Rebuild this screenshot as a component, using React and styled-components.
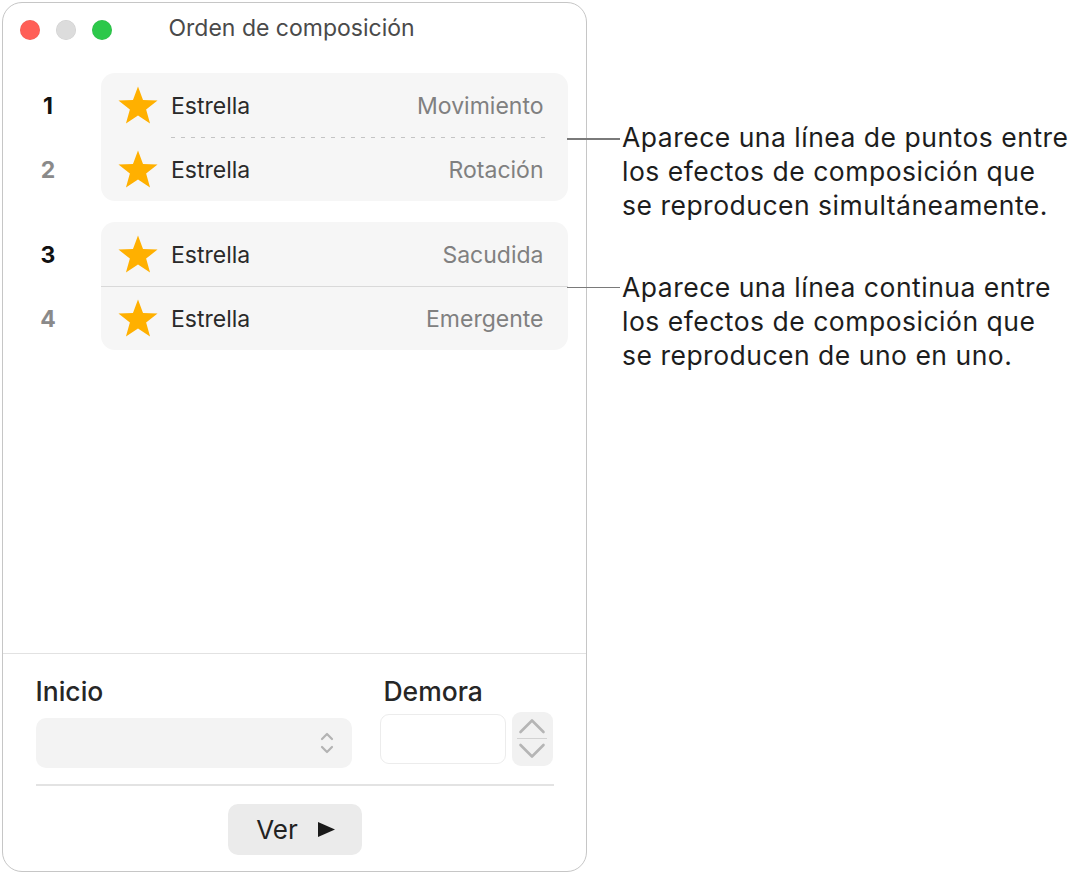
import React from "react";
import styled, { createGlobalStyle } from "styled-components";

const GlobalStyle = createGlobalStyle`
  html, body { margin: 0; padding: 0; background: #ffffff; }
  body {
    font-family: Inter, "Noto Sans", "Liberation Sans", sans-serif;
    -webkit-font-smoothing: antialiased;
    color: #1d1d1f;
  }
`;

const Page = styled.div`
  width: 1085px;
  height: 878px;
  box-sizing: border-box;
  padding: 2px 0 0 2px;
  display: flex;
  align-items: flex-start;
`;

const Window = styled.div`
  width: 585px;
  height: 870px;
  box-sizing: border-box;
  border: 1.5px solid #c6c6c6;
  border-radius: 20px;
  background: #fff;
  display: flex;
  flex-direction: column;
  overflow: hidden;
`;

const TitleBar = styled.div`
  height: 53px;
  display: flex;
  align-items: center;
  padding-left: 16.5px;
`;

const Lights = styled.div`
  display: flex;
  gap: 16px;
`;

const Light = styled.span`
  width: 20px;
  height: 20px;
  border-radius: 50%;
  background: ${(p) => p.$color};
  box-shadow: inset 0 0 0 0.5px rgba(0, 0, 0, 0.08);
`;

const Title = styled.div`
  margin-left: 57px;
  padding-bottom: 3px;
  font-size: 23px;
  color: #4a4a4a;
`;

const List = styled.div`
  flex: 1;
  display: flex;
  flex-direction: column;
  gap: 21px;
  padding: 16.5px 18.5px 0 0;
`;

const Group = styled.div`
  display: flex;
`;

const Numbers = styled.div`
  width: 90px;
  margin-right: 8px;
  display: flex;
  flex-direction: column;
`;

const Num = styled.div`
  height: 64px;
  padding-top: 3px;
  box-sizing: border-box;
  display: flex;
  align-items: center;
  justify-content: center;
  font-size: 23px;
  font-weight: 700;
  color: ${(p) => (p.$dim ? "#8a8a8a" : "#111")};
`;

const Box = styled.div`
  flex: 1;
  background: #f6f6f6;
  border-radius: 14px;
  display: flex;
  flex-direction: column;
`;

const Row = styled.div`
  height: ${(p) => (p.$last ? "62.5px" : "64px")};
  box-sizing: border-box;
  display: flex;
  align-items: center;
  padding: 2px 24px 0 15px;
`;

const StarIcon = styled.svg`
  width: 44px;
  height: 42px;
  margin-right: 11px;
  flex-shrink: 0;
`;

const Name = styled.div`
  flex: 1;
  font-size: 23px;
  color: #2a2a2a;
`;

const Effect = styled.div`
  font-size: 23px;
  color: #808080;
`;

const Divider = styled.div`
  height: 1.5px;
  ${(p) =>
    p.$dashed
      ? `margin: 0 22px 0 70px;
         background: repeating-linear-gradient(to right, #c4c4c4 0 4px, transparent 4px 10px);`
      : `background: #d9d9d9;`}
`;

const Bottom = styled.div`
  border-top: 1.5px solid #e2e2e2;
  padding: 22px 32.5px 16.5px;
  display: flex;
  flex-direction: column;
`;

const Fields = styled.div`
  display: grid;
  grid-template-columns: 316px 1fr;
  column-gap: 28px;
`;

const Field = styled.div`
  display: flex;
  flex-direction: column;
`;

const Label = styled.div`
  font-size: 26.5px;
  line-height: 30px;
  font-weight: 500;
  color: #262626;
  padding-left: ${(p) => p.$indent || 0}px;
`;

const Select = styled.div`
  margin-top: 12px;
  height: 50px;
  border-radius: 10px;
  background: #f3f3f3;
  display: flex;
  align-items: center;
  justify-content: flex-end;
  padding-right: 17px;
`;

const DelayRow = styled.div`
  margin-top: 6px;
  display: flex;
  gap: 6px;
  align-items: flex-start;
`;

const Input = styled.div`
  margin-top: 2px;
  width: 126px;
  height: 50px;
  box-sizing: border-box;
  border: 1.5px solid #ececec;
  border-radius: 9px;
  background: #fff;
`;

const Stepper = styled.div`
  width: 41px;
  height: 54px;
  border-radius: 9px;
  background: #f1f1f1;
  display: flex;
  flex-direction: column;
  align-items: center;
  justify-content: center;
`;

const StepLine = styled.div`
  width: 30px;
  height: 1.5px;
  background: #d2d2d2;
  margin: 4px 0;
`;

const InnerDivider = styled.div`
  margin-top: 16.5px;
  height: 1.5px;
  background: #e3e3e3;
`;

const ButtonRow = styled.div`
  margin-top: 18px;
  display: flex;
  justify-content: center;
`;

const PlayButton = styled.div`
  width: 134px;
  height: 51px;
  border-radius: 10px;
  background: #ebebeb;
  display: flex;
  align-items: center;
  justify-content: center;
  gap: 20px;
  font-size: 26px;
  color: #222;
  padding-left: 2px;
  box-sizing: border-box;
`;

const Notes = styled.div`
  margin-left: 35px;
  padding-top: 118px;
  display: flex;
  flex-direction: column;
  gap: 48px;
`;

const Note = styled.div`
  position: relative;
  font-size: 26.5px;
  letter-spacing: 0.5px;
  line-height: 34px;
  color: #1d1d1d;
  white-space: nowrap;
`;

const Leader = styled.span`
  position: absolute;
  left: -55px;
  top: ${(p) => p.$top}px;
  width: 53px;
  height: 1.5px;
  background: #7a7a7a;
`;

const Star = () => (
  <StarIcon viewBox="0 0 24 23">
    <polygon
      points="12,0.8 14.75,8.25 22.7,8.55 16.45,13.45 18.6,21.1 12,16.7 5.4,21.1 7.55,13.45 1.3,8.55 9.25,8.25"
      fill="#ffb000"
    />
  </StarIcon>
);

const SelectChevrons = () => (
  <svg width="16" height="24" viewBox="0 0 16 24" fill="none" stroke="#b3b3b3" strokeWidth="2.2" strokeLinecap="round" strokeLinejoin="round">
    <polyline points="3,8 8,3 13,8" />
    <polyline points="3,16 8,21 13,16" />
  </svg>
);

const ChevronUp = () => (
  <svg width="28" height="16" viewBox="0 0 28 16" fill="none" stroke="#b5b5b5" strokeWidth="2.6" strokeLinecap="round" strokeLinejoin="round">
    <polyline points="2.5,14 14,2.5 25.5,14" />
  </svg>
);

const ChevronDown = () => (
  <svg width="28" height="16" viewBox="0 0 28 16" fill="none" stroke="#b5b5b5" strokeWidth="2.6" strokeLinecap="round" strokeLinejoin="round">
    <polyline points="2.5,2 14,13.5 25.5,2" />
  </svg>
);

const PlayIcon = () => (
  <svg width="17" height="15" viewBox="0 0 17 15">
    <polygon points="0,0 17,7.5 0,15" fill="#1a1a1a" />
  </svg>
);

const groups = [
  {
    dashed: true,
    items: [
      { n: 1, effect: "Movimiento" },
      { n: 2, effect: "Rotación" },
    ],
  },
  {
    dashed: false,
    items: [
      { n: 3, effect: "Sacudida" },
      { n: 4, effect: "Emergente" },
    ],
  },
];

export default function App() {
  return (
    <>
      <GlobalStyle />
      <Page>
        <Window>
          <TitleBar>
            <Lights>
              <Light $color="#ff5f57" />
              <Light $color="#dcdcdc" />
              <Light $color="#2cc84a" />
            </Lights>
            <Title>Orden de composición</Title>
          </TitleBar>
          <List>
            {groups.map((g, gi) => (
              <Group key={gi}>
                <Numbers>
                  <Num>{g.items[0].n}</Num>
                  <Num $dim>{g.items[1].n}</Num>
                </Numbers>
                <Box>
                  <Row>
                    <Star />
                    <Name>Estrella</Name>
                    <Effect>{g.items[0].effect}</Effect>
                  </Row>
                  <Divider $dashed={g.dashed} />
                  <Row $last>
                    <Star />
                    <Name>Estrella</Name>
                    <Effect>{g.items[1].effect}</Effect>
                  </Row>
                </Box>
              </Group>
            ))}
          </List>
          <Bottom>
            <Fields>
              <Field>
                <Label>Inicio</Label>
                <Select>
                  <SelectChevrons />
                </Select>
              </Field>
              <Field>
                <Label $indent={4}>Demora</Label>
                <DelayRow>
                  <Input />
                  <Stepper>
                    <ChevronUp />
                    <StepLine />
                    <ChevronDown />
                  </Stepper>
                </DelayRow>
              </Field>
            </Fields>
            <InnerDivider />
            <ButtonRow>
              <PlayButton>
                <span>Ver</span>
                <PlayIcon />
              </PlayButton>
            </ButtonRow>
          </Bottom>
        </Window>
        <Notes>
          <Note>
            <Leader $top={18} />
            Aparece una línea de puntos entre
            <br />
            los efectos de composición que
            <br />
            se reproducen simultáneamente.
          </Note>
          <Note>
            <Leader $top={16.5} />
            Aparece una línea continua entre
            <br />
            los efectos de composición que
            <br />
            se reproducen de uno en uno.
          </Note>
        </Notes>
      </Page>
    </>
  );
}
